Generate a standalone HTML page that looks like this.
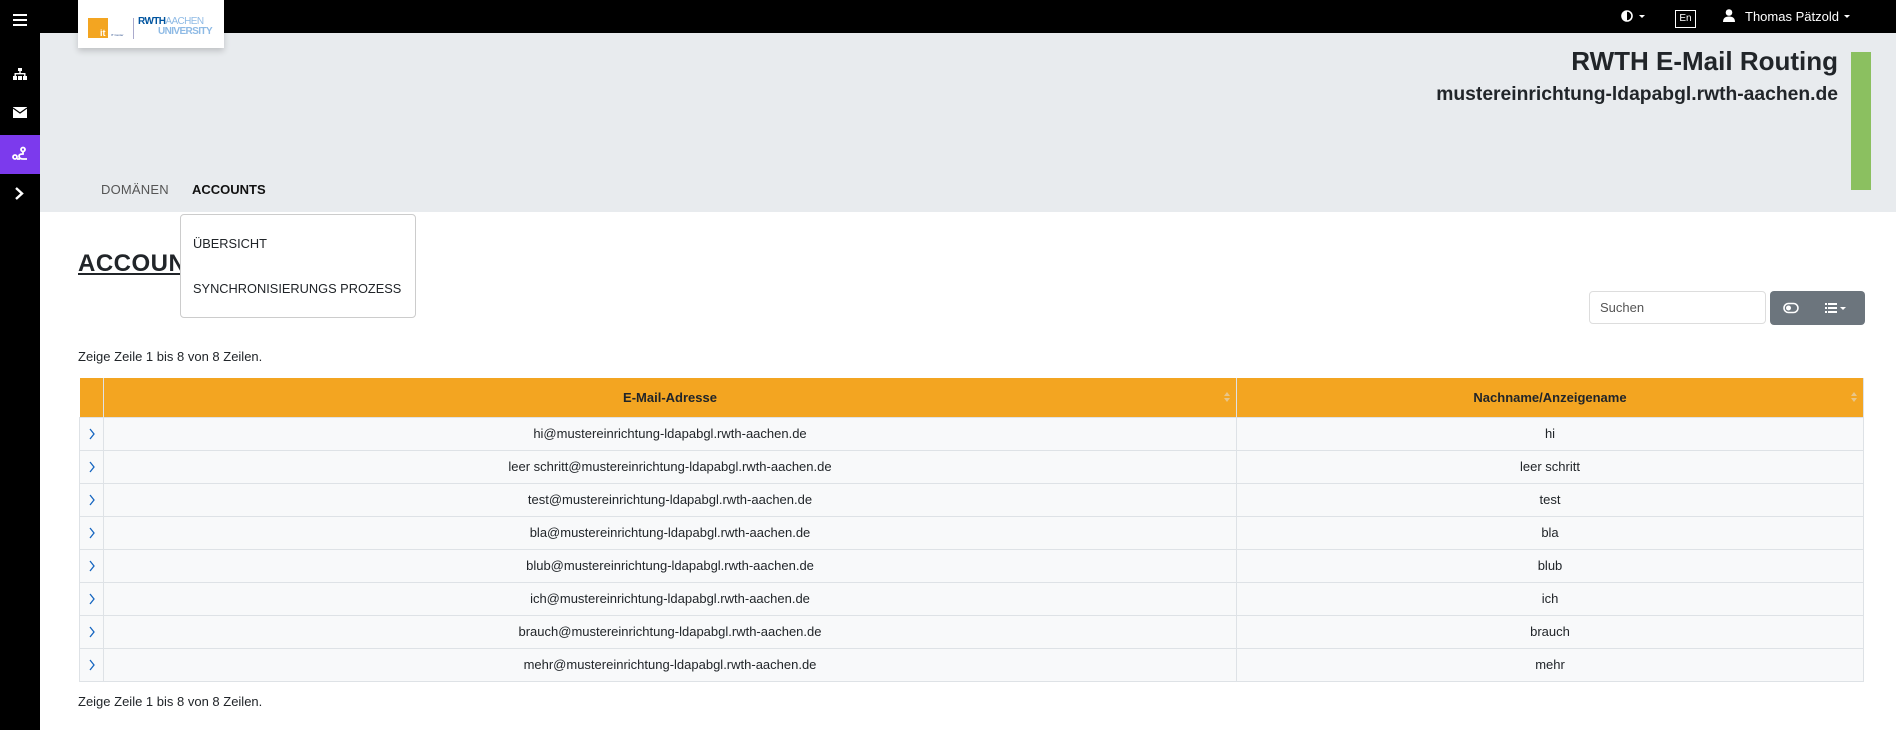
<!DOCTYPE html>
<html><head><meta charset="utf-8">
<style>
*{box-sizing:border-box;margin:0;padding:0}
body{width:1896px;height:730px;position:relative;overflow:hidden;background:#fff;font-family:"Liberation Sans",sans-serif;color:#212529;font-size:13px}
.abs{position:absolute}
#top{left:0;top:0;width:1896px;height:33px;background:#000}
#side{left:0;top:0;width:40px;height:730px;background:#000}
#hdr{left:40px;top:33px;width:1856px;height:179px;background:#e8ebee}
.navi{font-size:13px;font-weight:bold;top:182px}
table{border-collapse:collapse;position:absolute;left:79px;top:378px;width:1785px}
th{background:#f3a521;height:39px;font-size:13px;font-weight:bold;border-right:1px solid #dee2e6;position:relative}
td{height:33px;text-align:center;background:#f8f9fa;border-top:1px solid #dee2e6;border-right:1px solid #dee2e6;font-size:13px}
td:first-child{border-left:1px solid #dee2e6;width:24px}
tr:last-child td{border-bottom:1px solid #dee2e6}
.sort{position:absolute;right:6px;top:13px;width:6px;height:12px}
.chev{display:block;margin:0 auto}
</style></head><body>
<div id="top" class="abs"></div>
<div id="side" class="abs"></div>
<div id="hdr" class="abs"></div>
<svg class="abs" style="left:13px;top:13px" width="14" height="13"><rect y="1" width="14" height="2" fill="#fff"/><rect y="6" width="14" height="2" fill="#fff"/><rect y="11" width="14" height="2" fill="#fff"/></svg>
<svg class="abs" style="left:13px;top:68px" width="14" height="12" fill="#fff"><rect x="5" y="0" width="4" height="3"/><rect x="6.3" y="3" width="1.4" height="3"/><rect x="1.5" y="5" width="11" height="1.4"/><rect x="1.5" y="5" width="1.4" height="3"/><rect x="11.1" y="5" width="1.4" height="3"/><rect x="0" y="8" width="4" height="4"/><rect x="5" y="8" width="4" height="4"/><rect x="10" y="8" width="4" height="4"/></svg>
<svg class="abs" style="left:13px;top:107px" width="14" height="11"><rect width="14" height="11" fill="#fff"/><path d="M0 1 L7 6 L14 1" stroke="#000" stroke-width="1.2" fill="none"/></svg>
<div class="abs" style="left:0;top:135px;width:40px;height:39px;background:#7c3aed"></div>
<svg class="abs" style="left:12px;top:146px" width="16" height="16" fill="none" stroke="#fff" stroke-width="1.8"><circle cx="11" cy="3.5" r="2"/><circle cx="3" cy="11" r="2"/><path d="M11 6 L11 8 Q7 8 7 10 Q7 13 11 13 L15 13 M5 13 L8 13"/></svg>
<svg class="abs" style="left:14px;top:187px" width="10" height="13"><path d="M2 1 L8 6.5 L2 12" stroke="#fff" stroke-width="2.4" fill="none"/></svg>
<div class="abs" style="left:78px;top:0;width:146px;height:48px;background:#fff;box-shadow:0 3px 6px rgba(0,0,0,.18)"></div>
<div class="abs" style="left:88px;top:18px;width:20px;height:20px;background:#f3a521"></div>
<div class="abs" style="left:100px;top:28px;color:#fff;font-size:9px;font-weight:bold">it</div>
<div class="abs" style="left:111px;top:33px;font-size:3px;color:#2a4d8a">IT Center</div>
<div class="abs" style="left:133px;top:18px;width:1px;height:21px;background:#aac"></div>
<div class="abs" style="left:138px;top:17px;font-size:10px;font-weight:bold;color:#00549f;letter-spacing:-0.6px;line-height:10px">RWTH<span style="color:#8ebae5;font-weight:normal">AACHEN</span><br><span style="color:#8ebae5;margin-left:20px">UNIVERSITY</span></div>
<svg class="abs" style="left:1621px;top:10px" width="12" height="12"><circle cx="6" cy="6" r="5" stroke="#fff" stroke-width="1.6" fill="none"/><path d="M6 1 A5 5 0 0 0 6 11Z" fill="#fff"/></svg>
<svg class="abs" style="left:1639px;top:15px" width="6" height="3"><path d="M0 0 L6 0 L3 3Z" fill="#fff"/></svg>
<div class="abs" style="left:1675px;top:10px;width:21px;height:18px;border:1px solid #fff;color:#fff;font-size:10px;text-align:center;line-height:16px">En</div>
<svg class="abs" style="left:1723px;top:9px" width="12" height="13" fill="#fff"><circle cx="6" cy="3.5" r="3.3"/><path d="M0 13 Q0 7.5 6 7.5 Q12 7.5 12 13Z"/></svg>
<div class="abs" style="left:1745px;top:9px;color:#fff;font-size:13px">Thomas Pätzold</div>
<svg class="abs" style="left:1844px;top:15px" width="6" height="3"><path d="M0 0 L6 0 L3 3Z" fill="#fff"/></svg>
<div class="abs" style="right:58px;top:46px;font-size:26px;font-weight:bold;white-space:nowrap">RWTH E-Mail Routing</div>
<div class="abs" style="right:58px;top:84px;font-size:19.3px;font-weight:bold;white-space:nowrap">mustereinrichtung-ldapabgl.rwth-aachen.de</div>
<div class="abs" style="left:1851px;top:52px;width:20px;height:138px;background:#8bc060"></div>
<div class="abs navi" style="left:101px;color:#555;font-weight:normal;letter-spacing:0.2px">DOMÄNEN</div>
<div class="abs navi" style="left:192px;color:#111">ACCOUNTS</div>
<div class="abs" style="left:78px;top:250px;font-size:24px;font-weight:bold;text-decoration:underline;letter-spacing:0.5px">ACCOUNTS</div>
<div class="abs" style="left:180px;top:214px;width:236px;height:104px;background:#fff;border:1px solid #ccc;border-radius:4px"></div>
<div class="abs" style="left:193px;top:236px;font-size:12.8px">ÜBERSICHT</div>
<div class="abs" style="left:193px;top:281px;font-size:12.8px">SYNCHRONISIERUNGS PROZESS</div>
<div class="abs" style="left:1589px;top:291px;width:177px;height:33px;border:1px solid #ddd;border-radius:4px;padding:8px 10px;color:#555;font-size:13px">Suchen</div>
<div class="abs" style="left:1770px;top:291px;width:95px;height:34px;background:#6c757d;border-radius:4px"></div>
<svg class="abs" style="left:1783px;top:302px" width="16" height="12"><rect x="1" y="1.5" width="14" height="9" rx="4.5" stroke="#fff" stroke-width="1.6" fill="none"/><circle cx="5.5" cy="6" r="2.5" fill="#fff"/></svg>
<svg class="abs" style="left:1825px;top:302px" width="22" height="12" fill="#fff"><rect x="0" y="1" width="2" height="2"/><rect x="3" y="1" width="9" height="2"/><rect x="0" y="5" width="2" height="2"/><rect x="3" y="5" width="9" height="2"/><rect x="0" y="9" width="2" height="2"/><rect x="3" y="9" width="9" height="2"/><path d="M15 5 L21 5 L18 8Z"/></svg>
<div class="abs" style="left:78px;top:349px">Zeige Zeile 1 bis 8 von 8 Zeilen.</div>
<table>
<tr><th style="width:24px"></th><th style="width:1133px">E-Mail-Adresse<svg class="sort"><path d="M0 5 L3 1 L6 5Z M0 7 L3 11 L6 7Z" fill="#e8c58a"/></svg></th><th>Nachname/Anzeigename<svg class="sort"><path d="M0 5 L3 1 L6 5Z M0 7 L3 11 L6 7Z" fill="#e8c58a"/></svg></th></tr>
<tr><td><svg class="chev" width="6" height="12"><path d="M1 1 L5 6 L1 11" stroke="#1565c0" stroke-width="1.3" fill="none"/></svg></td><td>hi@mustereinrichtung-ldapabgl.rwth-aachen.de</td><td>hi</td></tr>
<tr><td><svg class="chev" width="6" height="12"><path d="M1 1 L5 6 L1 11" stroke="#1565c0" stroke-width="1.3" fill="none"/></svg></td><td>leer schritt@mustereinrichtung-ldapabgl.rwth-aachen.de</td><td>leer schritt</td></tr>
<tr><td><svg class="chev" width="6" height="12"><path d="M1 1 L5 6 L1 11" stroke="#1565c0" stroke-width="1.3" fill="none"/></svg></td><td>test@mustereinrichtung-ldapabgl.rwth-aachen.de</td><td>test</td></tr>
<tr><td><svg class="chev" width="6" height="12"><path d="M1 1 L5 6 L1 11" stroke="#1565c0" stroke-width="1.3" fill="none"/></svg></td><td>bla@mustereinrichtung-ldapabgl.rwth-aachen.de</td><td>bla</td></tr>
<tr><td><svg class="chev" width="6" height="12"><path d="M1 1 L5 6 L1 11" stroke="#1565c0" stroke-width="1.3" fill="none"/></svg></td><td>blub@mustereinrichtung-ldapabgl.rwth-aachen.de</td><td>blub</td></tr>
<tr><td><svg class="chev" width="6" height="12"><path d="M1 1 L5 6 L1 11" stroke="#1565c0" stroke-width="1.3" fill="none"/></svg></td><td>ich@mustereinrichtung-ldapabgl.rwth-aachen.de</td><td>ich</td></tr>
<tr><td><svg class="chev" width="6" height="12"><path d="M1 1 L5 6 L1 11" stroke="#1565c0" stroke-width="1.3" fill="none"/></svg></td><td>brauch@mustereinrichtung-ldapabgl.rwth-aachen.de</td><td>brauch</td></tr>
<tr><td><svg class="chev" width="6" height="12"><path d="M1 1 L5 6 L1 11" stroke="#1565c0" stroke-width="1.3" fill="none"/></svg></td><td>mehr@mustereinrichtung-ldapabgl.rwth-aachen.de</td><td>mehr</td></tr>
</table>
<div class="abs" style="left:78px;top:694px">Zeige Zeile 1 bis 8 von 8 Zeilen.</div>
</body></html>
